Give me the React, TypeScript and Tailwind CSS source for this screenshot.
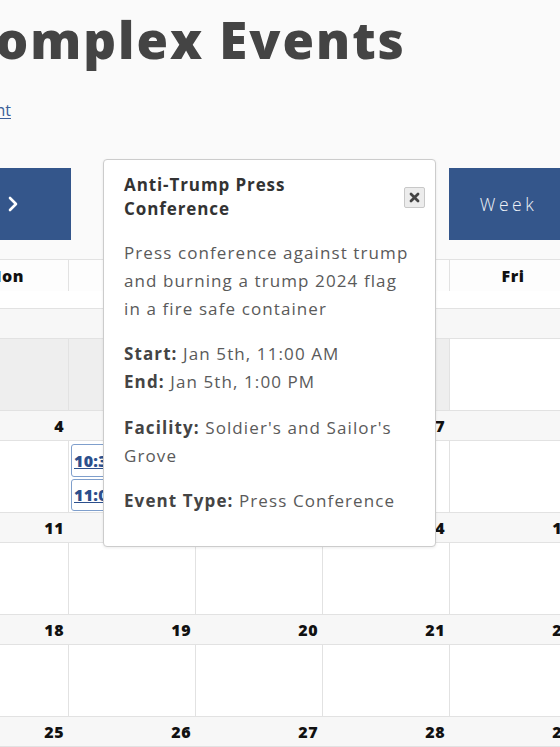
import React from "react";

const weeks: { n: number; other: boolean }[][] = [
  [27, 28, 29, 30, 31, 1, 2].map((n, i) => ({ n, other: i < 5 })),
  [3, 4, 5, 6, 7, 8, 9].map((n) => ({ n, other: false })),
  [10, 11, 12, 13, 14, 15, 16].map((n) => ({ n, other: false })),
  [17, 18, 19, 20, 21, 22, 23].map((n) => ({ n, other: false })),
  [24, 25, 26, 27, 28, 29, 30].map((n) => ({ n, other: false })),
];

const days = ["Sun", "Mon", "Tue", "Wed", "Thu", "Fri", "Sat"];

export default function App() {
  return (
    <div className="relative w-[560px] h-[747px] overflow-hidden bg-[#fafafa] font-['Open_Sans',sans-serif]">
      {/* Title */}
      <div className="flex justify-end w-[406px] pt-[8px]">
        <h1 className="whitespace-nowrap text-[51px] leading-[62px] font-extrabold tracking-[2px] text-[#444444]">
          Complex Events
        </h1>
      </div>
      {/* Link */}
      <div className="flex justify-end w-[11px] mt-[30px]">
        <a className="whitespace-nowrap text-[16px] leading-[20px] text-[#3b5f99] underline underline-offset-2">
          Add Event
        </a>
      </div>
      {/* Toolbar */}
      <div className="flex ml-[-45px] mt-[48px]">
        <button className="shrink-0 w-[116px] h-[72px] bg-[#34568b] flex items-center justify-center">
          <svg width="12" height="16" viewBox="0 0 12 16">
            <polyline points="3,2 9,8 3,14" fill="none" stroke="#ffffff" strokeWidth="2.6" strokeLinecap="round" strokeLinejoin="round" />
          </svg>
        </button>
        <button className="shrink-0 ml-[378px] w-[116px] h-[72px] bg-[#34568b] flex items-center justify-center pl-[3px] text-[17.5px] tracking-[3.5px] font-light text-[#eef1f6]">
          Week
        </button>
      </div>
      {/* Calendar */}
      <div className="mt-[19px] ml-[-186px] w-[889px] bg-white">
        <div className="grid grid-cols-7 h-[32px] border-t border-[#e2e2e2] bg-[#fdfdfd]">
          {days.map((d, i) => (
            <div key={d} className={`flex items-center justify-center text-[16px] font-extrabold tracking-[0.5px] text-[#111] ${i > 0 ? "border-l border-[#e2e2e2]" : ""}`}>
              {d}
            </div>
          ))}
        </div>
        <div className="h-[17px] bg-white"></div>
        {weeks.map((w, wi) => (
          <div key={wi}>
            <div className="grid grid-cols-7 h-[31px] bg-[#f7f7f7] border-y border-[#e2e2e2]">
              {w.map((d, di) => (
                <div key={di} className="flex items-center justify-end pr-[4px] text-[16px] font-extrabold tracking-[0.5px] text-[#111]">
                  {d.other ? "" : d.n}
                </div>
              ))}
            </div>
            <div className="grid grid-cols-7 h-[71px]">
              {w.map((d, di) => (
                <div
                  key={di}
                  className={`${di > 0 ? "border-l border-[#e2e2e2]" : ""} ${d.other ? "bg-[#eeeeee]" : "bg-white"} flex flex-col gap-[2px] pt-[3px] px-[2px]`}
                >
                  {wi === 1 && di === 2 && (
                    <>
                      <div className="h-[33px] border border-[#7f9fcc] rounded-[3px] bg-white flex items-center px-[2px] overflow-hidden whitespace-nowrap text-[16px] font-extrabold tracking-[0.3px] text-[#2c4f8c] underline">
                        10:30 AM
                      </div>
                      <div className="h-[32px] border border-[#7f9fcc] rounded-[3px] bg-white flex items-center px-[2px] overflow-hidden whitespace-nowrap text-[16px] font-extrabold tracking-[0.3px] text-[#2c4f8c] underline">
                        11:00 AM
                      </div>
                    </>
                  )}
                </div>
              ))}
            </div>
          </div>
        ))}
      </div>

      {/* Popover */}
      <div className="absolute left-[103px] top-[159px] w-[333px] h-[388px] bg-white border border-[#cccccc] rounded-[4px] shadow-[0_1px_3px_rgba(0,0,0,0.08)] pl-[20px] pr-[10px] pt-[13px] text-[#5a5a5a] text-[17px] tracking-[1.1px]">
        <div className="flex justify-between items-start">
          <div className="text-[17px] leading-[24px] font-bold tracking-[0.9px] text-[#333333] w-[230px]">
            Anti-Trump Press Conference
          </div>
          <button className="mt-[14px] w-[21px] h-[21px] bg-[#ececec] border border-[#c8c8c8] rounded-[2px] flex items-center justify-center">
            <svg width="11" height="11" viewBox="0 0 11 11">
              <path d="M2 2 L9 9 M9 2 L2 9" stroke="#444" strokeWidth="2.8" strokeLinecap="round" />
            </svg>
          </button>
        </div>
        <div className="pr-[10px]">
          <p className="mt-[18px] leading-[28px]">
            Press conference against trump and burning a trump 2024 flag in a fire safe container
          </p>
          <div className="mt-[17px] leading-[28px]">
            <div><span className="font-bold text-[#444]">Start:</span> Jan 5th, 11:00 AM</div>
            <div><span className="font-bold text-[#444]">End:</span> Jan 5th, 1:00 PM</div>
          </div>
          <div className="mt-[18px] leading-[28px]">
            <span className="font-bold text-[#444]">Facility:</span> Soldier's and Sailor's Grove
          </div>
          <div className="mt-[17px] leading-[28px]">
            <span className="font-bold text-[#444]">Event Type:</span> Press Conference
          </div>
        </div>
      </div>
    </div>
  );
}
